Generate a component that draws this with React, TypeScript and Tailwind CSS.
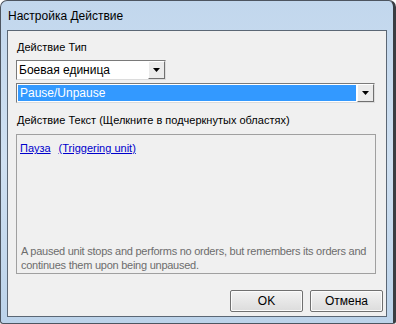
import React from "react";

function ComboArrow() {
  return (
    <div className="h-[18px] w-[17px] flex items-center justify-center bg-[#ebebeb] border border-t-white border-l-white border-b-[#707070] border-r-[#707070]">
      <svg width="7" height="4" viewBox="0 0 7 4">
        <path d="M0 0h7L3.5 4z" fill="#000" />
      </svg>
    </div>
  );
}

function Button({ label }: { label: string }) {
  return (
    <button className="w-[73px] h-[22px] bg-gradient-to-b from-[#f2f2f2] to-[#dcdcdc] border border-[#707070] text-[12px] text-black flex items-center justify-center rounded-[2px] shadow-[inset_0_0_0_1px_#fbfbfb]">
      {label}
    </button>
  );
}

export default function App() {
  return (
    <div
      className="w-[396px] h-[324px] bg-white overflow-hidden"
      style={{ fontFamily: '"Liberation Sans", Arial, sans-serif' }}
    >
      <div className="w-full h-full rounded-t-[7px] rounded-b-[3px] border border-[#4d5560] border-r-[3px] border-r-[#3a3d42] bg-gradient-to-b from-[#c2d7ed] via-[#cfe0f1] to-[#bcd3ea] flex flex-col">
        {/* Title bar */}
        <div className="h-[29px] px-[7px] flex items-center text-[12px] text-black">
          Настройка Действие
        </div>

        {/* Client area */}
        <div className="mx-[6px] mb-[6px] flex-1 border border-[#5b6775] bg-[#f0f0f0] flex flex-col px-[8px] text-[11px] text-black">
          <div className="mt-[9px] h-[14px] leading-[14px] pl-[1px]">Действие Тип</div>

          {/* Combo 1 */}
          <div className="mt-[6px] w-[150px] h-[20px] flex bg-white border border-[#7a7a7a] border-r-[#dcdcdc] border-b-[#dcdcdc]">
            <div className="flex-1 flex items-center pl-[2px] text-[12px]">Боевая единица</div>
            <ComboArrow />
          </div>

          {/* Combo 2 */}
          <div className="mt-[3px] w-[359px] h-[20px] flex bg-white border border-[#7a7a7a] border-r-[#dcdcdc] border-b-[#dcdcdc]">
            <div className="flex-1 m-[1px] bg-[#3399ff] text-white flex items-center pl-[2px] text-[12px]">
              Pause/Unpause
            </div>
            <ComboArrow />
          </div>

          <div className="mt-[10px] h-[14px] leading-[14px] pl-[1px]">
            Действие Текст (Щелкните в подчеркнутых областях)
          </div>

          {/* Text box */}
          <div className="mt-[7px] w-[360px] h-[140px] border border-[#a0a0a0] bg-[#f0f0f0] flex flex-col justify-between px-[3px] pt-[7px] pb-[1px]">
            <div className="flex gap-[8px] text-[11px] leading-[13px] text-[#0000cc]">
              <span className="underline">Пауза</span>
              <span className="underline">(Triggering unit)</span>
            </div>
            <div className="text-[11px] leading-[14px] text-[#6d6d6d] pl-[1px] tracking-[-0.25px]">
              A paused unit stops and performs no orders, but remembers its orders and continues them upon being unpaused.
            </div>
          </div>

          {/* Buttons */}
          <div className="mt-[16px] -mr-[5px] flex justify-end gap-[7px]">
            <Button label="OK" />
            <Button label="Отмена" />
          </div>
        </div>
      </div>
    </div>
  );
}
